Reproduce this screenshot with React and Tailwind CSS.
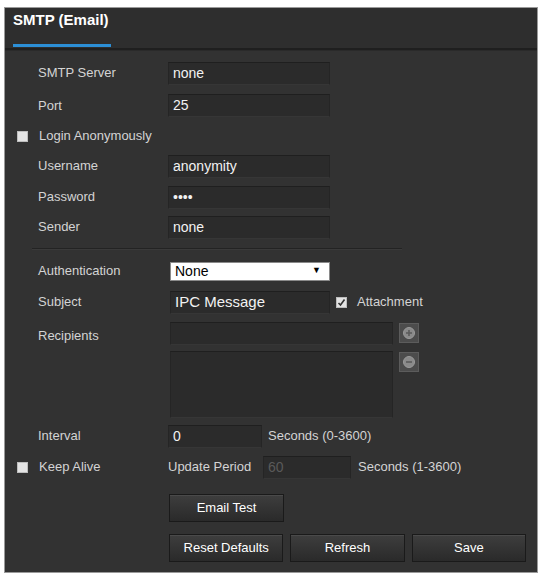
import React from 'react';

const font = { fontFamily: '"Liberation Sans", Arial, sans-serif' };

const Box = ({ checked }) => (
  <span className="w-[11px] h-[11px] bg-[#e4e4e4] border border-[#bdbdbd] flex items-center justify-center shrink-0">
    {checked && (
      <svg width="9" height="9" viewBox="0 0 9 9">
        <path d="M1.5 5 L3.5 7 L7.5 1.5" stroke="#333" strokeWidth="1.6" fill="none" />
      </svg>
    )}
  </span>
);

const Field = ({ value, w = 'w-[162px]', dim }) => (
  <div className={`${w} h-[23px] bg-[#2b2b2b] border border-[#252525] border-t-[#1f1f1f] border-b-[#363636] flex items-center px-[4px] text-[14px] ${dim ? 'text-[#5a5a5a]' : 'text-[#f2f2f2]'}`}>
    {value}
  </div>
);

const Row = ({ label, check, h, children }) => (
  <div className={`flex items-center ${h}`}>
    <div className="w-[152px] flex items-center text-[13px] text-[#d4d4d4]">
      {check ? (
        <span className="flex items-center gap-[11px] pl-[1px]"><Box />{label}</span>
      ) : (
        <span className="pl-[22px]">{label}</span>
      )}
    </div>
    {children}
  </div>
);

const Btn = ({ children }) => (
  <button className="w-[115px] h-[28px] bg-gradient-to-b from-[#3e3e3e] to-[#2a2a2a] border border-[#1a1a1a] shadow-[inset_0_1px_0_#4a4a4a] text-[13px] text-white">
    {children}
  </button>
);

const RoundBtn = ({ minus }) => (
  <div className="w-[20px] h-[20px] bg-[#4c4c4c] border border-[#5c5c5c] flex items-center justify-center">
    <svg width="14" height="14" viewBox="0 0 14 14">
      <circle cx="7" cy="7" r="5.5" fill="#8a8a8a" stroke="#9a9a9a" />
      <path d={minus ? 'M4 7 H10' : 'M4 7 H10 M7 4 V10'} stroke="#5a5a5a" strokeWidth="1.6" />
    </svg>
  </div>
);

export default function App() {
  return (
    <div className="w-[540px] h-[576px] bg-white pt-[7px] pl-[4px]" style={font}>
      <div className="w-[534px] h-[566px] bg-[#323232] border border-[#9a9a9a] flex flex-col">
        <header className="h-[40px] bg-[#2e2e2e] px-[8px] flex flex-col justify-between">
          <h1 className="text-[15px] font-bold text-white pt-[1px]">SMTP (Email)</h1>
          <div className="w-[98px] h-[3px] bg-[#2c8fd6] mb-[1px]" />
        </header>
        <div className="h-[3px] bg-[#1f1f1f] border-b border-[#2a2a2a]" />

        <div className="flex flex-col px-[11px] pt-[6px]">
          <Row label="SMTP Server" h="h-[32px]"><Field value="none" /></Row>
          <Row label="Port" h="h-[33px]"><Field value="25" /></Row>
          <Row label="Login Anonymously" check h="h-[28px]" />
          <Row label="Username" h="h-[32px]"><Field value="anonymity" /></Row>
          <Row label="Password" h="h-[30px]"><Field value="••••" /></Row>
          <Row label="Sender" h="h-[30px]"><Field value="none" /></Row>

          <div className="h-[14px] flex items-center">
            <div className="ml-[16px] w-[370px] h-[2px] bg-[#232323] border-b border-[#3a3a3a]" />
          </div>

          <Row label="Authentication" h="h-[30px]">
            <div className="ml-[2px] w-[160px] h-[19px] bg-white border border-[#8a8a8a] flex items-center justify-between px-[4px] text-[14px] text-black">
              <span>None</span>
              <span className="text-[9px] pr-[4px]">▼</span>
            </div>
          </Row>
          <Row label="Subject" h="h-[32px]">
            <Field value="IPC Message" w="w-[160px] ml-[2px] text-[15px]" />
            <span className="ml-[6px] flex items-center gap-[10px] text-[13px] text-[#d4d4d4]">
              <Box checked />Attachment
            </span>
          </Row>

          <div className="flex pt-[4px]">
            <div className="w-[152px] pl-[22px] pt-[4px] text-[13px] text-[#d4d4d4]">Recipients</div>
            <div className="flex flex-col gap-[6px] ml-[2px]">
              <Field value="" w="w-[223px]" />
              <div className="w-[223px] h-[67px] bg-[#2b2b2b] border border-[#252525] border-t-[#1f1f1f] border-b-[#363636]" />
            </div>
            <div className="flex flex-col gap-[9px] ml-[6px] pt-[1px]">
              <RoundBtn />
              <RoundBtn minus />
            </div>
          </div>

          <Row label="Interval" h="h-[34px] mt-[1px]">
            <Field value="0" w="w-[94px]" />
            <span className="ml-[6px] text-[13px] text-[#d4d4d4]">Seconds (0-3600)</span>
          </Row>
          <Row label="Keep Alive" check h="h-[28px]">
            <span className="text-[13px] text-[#d4d4d4] w-[95px]">Update Period</span>
            <Field value="60" w="w-[88px]" dim />
            <span className="ml-[7px] text-[13px] text-[#d4d4d4]">Seconds (1-3600)</span>
          </Row>

          <div className="flex flex-col gap-[12px] pl-[153px] pt-[13px]">
            <Btn>Email Test</Btn>
            <div className="flex gap-[7px]">
              <Btn>Reset Defaults</Btn>
              <Btn>Refresh</Btn>
              <Btn>Save</Btn>
            </div>
          </div>
        </div>
      </div>
    </div>
  );
}
